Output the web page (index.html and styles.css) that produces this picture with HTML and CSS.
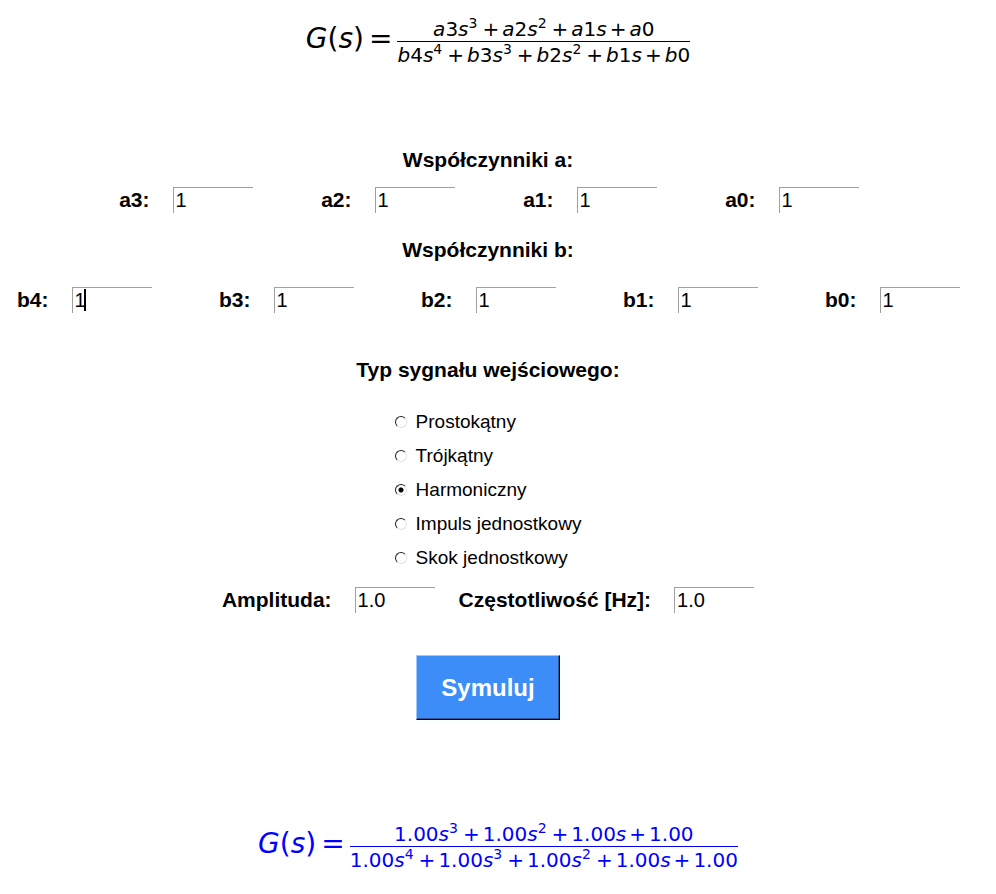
FILE: index.html
```html
<!DOCTYPE html>
<html lang="pl">
<head>
<meta charset="utf-8">
<title>G(s)</title>
<link rel="stylesheet" href="styles.css">
</head>
<body>
<div class="formula">
  <div class="lhs"><i>G</i>(<i>s</i>)<span class="eq">=</span></div>
  <div class="fraction">
    <div class="num"><i>a</i>3<i>s</i><sup>3</sup><span class="op">+</span><i>a</i>2<i>s</i><sup>2</sup><span class="op">+</span><i>a</i>1<i>s</i><span class="op">+</span><i>a</i>0</div>
    <div class="den"><i>b</i>4<i>s</i><sup>4</sup><span class="op">+</span><i>b</i>3<i>s</i><sup>3</sup><span class="op">+</span><i>b</i>2<i>s</i><sup>2</sup><span class="op">+</span><i>b</i>1<i>s</i><span class="op">+</span><i>b</i>0</div>
  </div>
</div>
<form class="panel">
  <h2 class="title title-a">Współczynniki a:</h2>
  <div class="row row-a">
    <div class="field"><label for="a3">a3:</label><input id="a3" type="text" value="1"></div>
    <div class="field"><label for="a2">a2:</label><input id="a2" type="text" value="1"></div>
    <div class="field"><label for="a1">a1:</label><input id="a1" type="text" value="1"></div>
    <div class="field"><label for="a0">a0:</label><input id="a0" type="text" value="1"></div>
  </div>
  <h2 class="title title-b">Współczynniki b:</h2>
  <div class="row row-b">
    <div class="field active"><label for="b4">b4:</label><input id="b4" type="text" value="1"><span class="caret"></span></div>
    <div class="field"><label for="b3">b3:</label><input id="b3" type="text" value="1"></div>
    <div class="field"><label for="b2">b2:</label><input id="b2" type="text" value="1"></div>
    <div class="field"><label for="b1">b1:</label><input id="b1" type="text" value="1"></div>
    <div class="field"><label for="b0">b0:</label><input id="b0" type="text" value="1"></div>
  </div>
  <h2 class="title title-signal" id="signal-title">Typ sygnału wejściowego:</h2>
  <div class="options" role="radiogroup" aria-labelledby="signal-title">
    <label class="option"><input type="radio" name="signal">Prostokątny</label>
    <label class="option"><input type="radio" name="signal">Trójkątny</label>
    <label class="option"><input type="radio" name="signal" checked>Harmoniczny</label>
    <label class="option"><input type="radio" name="signal">Impuls jednostkowy</label>
    <label class="option"><input type="radio" name="signal">Skok jednostkowy</label>
  </div>
  <div class="row params">
    <div class="field"><label for="amp">Amplituda:</label><input id="amp" type="text" value="1.0"></div>
    <div class="field"><label for="freq">Częstotliwość [Hz]:</label><input id="freq" type="text" value="1.0"></div>
  </div>
  <button class="run" type="button">Symuluj</button>
</form>
<div class="formula result">
  <div class="lhs"><i>G</i>(<i>s</i>)<span class="eq">=</span></div>
  <div class="fraction">
    <div class="num">1.00<i>s</i><sup>3</sup><span class="op">+</span>1.00<i>s</i><sup>2</sup><span class="op">+</span>1.00<i>s</i><span class="op">+</span>1.00</div>
    <div class="den">1.00<i>s</i><sup>4</sup><span class="op">+</span>1.00<i>s</i><sup>3</sup><span class="op">+</span>1.00<i>s</i><sup>2</sup><span class="op">+</span>1.00<i>s</i><span class="op">+</span>1.00</div>
  </div>
</div>
</body>
</html>
```
FILE: styles.css
```css
* {
  box-sizing: border-box;
}

body {
  margin: 0;
  padding: 17px 0;
  background: #fff;
  color: #000;
  font-family: "Liberation Sans", Arial, sans-serif;
}

.formula {
  display: flex;
  justify-content: center;
  align-items: center;
  font-family: "DejaVu Sans", sans-serif;
  white-space: nowrap;
}

.result {
  margin-top: 102px;
  color: #00f;
}

.lhs {
  padding-bottom: 8px;
  font-size: 28px;
  line-height: 32px;
}

.eq {
  margin: 0 5px;
}

.fraction {
  font-size: 20px;
  text-align: center;
}

.num {
  line-height: 24px;
  border-bottom: 1px solid currentColor;
}

.den {
  line-height: 26px;
}

.op {
  margin: 0 3px;
}

sup {
  margin-right: 2px;
  font-size: 14px;
  line-height: 0;
  vertical-align: 8px;
}

.panel {
  display: flex;
  flex-direction: column;
  align-items: center;
  margin-top: 80px;
  padding-right: 20px;
}

.title {
  margin: 0;
  font-size: 21px;
  line-height: 24px;
}

.title-b {
  margin-top: 25px;
}

.title-signal {
  margin-top: 45px;
}

.row {
  display: flex;
  flex-wrap: wrap;
  justify-content: center;
  column-gap: 67px;
}

.row-a {
  margin-top: 15px;
}

.row-b {
  margin-top: 25px;
}

.params {
  margin-top: 12px;
  column-gap: 24px;
}

.field {
  position: relative;
  display: flex;
  align-items: center;
  gap: 23px;
}

.field label {
  min-width: 32px;
  font-size: 21px;
  font-weight: bold;
  line-height: 24px;
  text-align: right;
}

.field input {
  width: 80px;
  height: 26px;
  padding: 0 2px;
  border: 0 solid #a0a0a0;
  border-width: 1px 0 0 1px;
  border-radius: 0;
  background: #fff;
  color: #000;
  font-family: inherit;
  font-size: 20px;
  outline: none;
}

.caret {
  position: absolute;
  top: 2px;
  right: 66px;
  width: 2px;
  height: 22px;
  background: #000;
}

.options {
  display: flex;
  flex-direction: column;
  margin-top: 23px;
}

.option {
  display: flex;
  align-items: center;
  gap: 9px;
  font-size: 19px;
  line-height: 34px;
}

.option input {
  appearance: none;
  width: 12px;
  height: 12px;
  margin: 0;
  border: 1px solid #e3e3e3;
  border-top-color: #222;
  border-left-color: #222;
  border-radius: 50%;
  background: #fff;
}

.option input:checked {
  background: radial-gradient(circle, #000 2px, #fff 3px);
}

.run {
  margin-top: 42px;
  padding: 0 24px;
  height: 65px;
  border: 1px solid #000;
  border-top-color: #9ec6fb;
  border-left-color: #9ec6fb;
  border-radius: 0;
  background: #3c8df8;
  box-shadow: inset -1px -1px #265c9f;
  color: #fff;
  font-family: inherit;
  font-size: 24px;
  font-weight: bold;
}
```
